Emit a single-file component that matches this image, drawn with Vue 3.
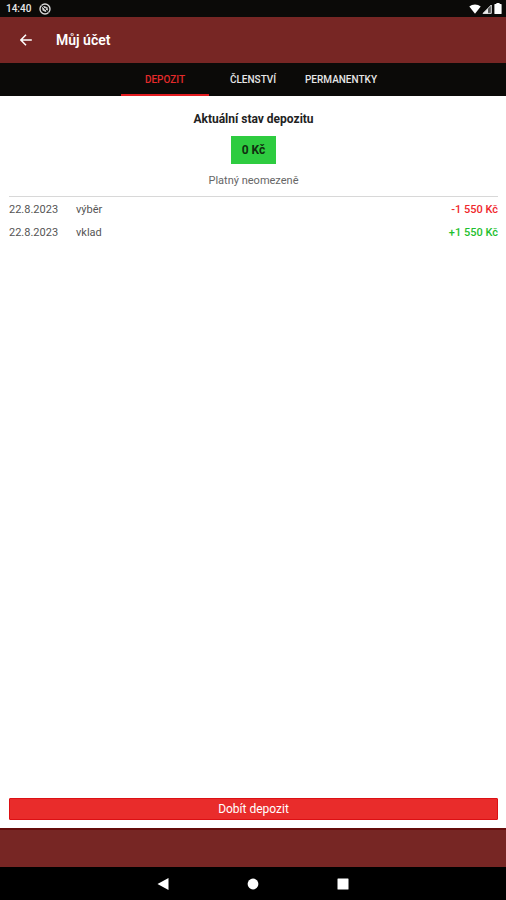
<template>
  <div class="screen">
    <div class="status-bar">
      <span class="time">14:40</span>
      <svg class="status-icon" viewBox="0 0 12 12" aria-hidden="true">
        <circle cx="6" cy="6" r="5" fill="none" stroke="#d8d8d8" stroke-width="1.4" />
        <path d="M3 4.5L5 3L8.5 4.2L9 7L6.5 9L3.6 7.6Z" fill="#d0d0d0" />
        <path d="M2.6 2.6L9.4 9.4M5.8 6.4L7.4 4.8" stroke="#111" stroke-width="0.9" />
      </svg>
      <div class="status-right">
        <svg width="12" height="10" viewBox="0 0 12 10" aria-hidden="true">
          <path d="M0.3 2.6C3.4 -0.3 8.6 -0.3 11.7 2.6L6 9.8Z" fill="#fff" />
        </svg>
        <svg width="10" height="10" viewBox="0 0 10 10" aria-hidden="true">
          <path d="M1 9.4L9.3 1V9.4Z" fill="#555" stroke="#ddd" stroke-width="1" />
          <path d="M1 9.5L6 4.5V9.5Z" fill="#eee" />
        </svg>
        <svg class="battery" width="8" height="11" viewBox="0 0 8 11" aria-hidden="true">
          <path d="M2.4 0H5.6V1H7Q7.6 1 7.6 1.6V10.4Q7.6 11 7 11H1Q0.4 11 0.4 10.4V1.6Q0.4 1 1 1H2.4Z" fill="#fff" />
        </svg>
      </div>
    </div>

    <header class="app-header">
      <button class="back-btn" type="button" aria-label="Zpět">
        <svg width="12" height="12" viewBox="0 0 12 12" aria-hidden="true">
          <path d="M11.8 6H1M6 0.8L0.9 6L6 11.2" fill="none" stroke="#fff" stroke-width="1.5" />
        </svg>
      </button>
      <h1>Můj účet</h1>
    </header>

    <nav class="tabs">
      <button
        v-for="tab in tabs"
        :key="tab"
        type="button"
        class="tab"
        :class="{ active: tab === activeTab }"
        @click="activeTab = tab"
      >
        {{ tab }}
      </button>
    </nav>

    <main class="content">
      <section class="summary">
        <h2>Aktuální stav depozitu</h2>
        <div class="balance">0 Kč</div>
        <p>Platný neomezeně</p>
      </section>

      <table class="history">
        <tbody>
          <tr v-for="item in history" :key="item.type">
            <td class="date">{{ item.date }}</td>
            <td>{{ item.type }}</td>
            <td class="amount" :class="item.kind">{{ item.amount }}</td>
          </tr>
        </tbody>
      </table>

      <button class="topup-btn" type="button">Dobít depozit</button>
    </main>

    <div class="bottom-strip"></div>

    <div class="system-nav">
      <button type="button" aria-label="Zpět">
        <svg width="12" height="12" viewBox="0 0 12 12" aria-hidden="true">
          <path d="M0.5 6L11.5 0V12Z" fill="#fff" />
        </svg>
      </button>
      <button type="button" aria-label="Domů">
        <svg width="12" height="12" viewBox="0 0 12 12" aria-hidden="true">
          <circle cx="6" cy="6" r="5.4" fill="#fff" />
        </svg>
      </button>
      <button type="button" aria-label="Poslední aplikace">
        <svg width="12" height="12" viewBox="0 0 12 12" aria-hidden="true">
          <rect x="0.5" y="0.5" width="11" height="11" rx="0.5" fill="#fff" />
        </svg>
      </button>
    </div>
  </div>
</template>

<script setup>
import { ref } from 'vue'

const tabs = ['DEPOZIT', 'ČLENSTVÍ', 'PERMANENTKY']
const activeTab = ref('DEPOZIT')

const history = [
  { date: '22.8.2023', type: 'výběr', amount: '-1 550 Kč', kind: 'minus' },
  { date: '22.8.2023', type: 'vklad', amount: '+1 550 Kč', kind: 'plus' }
]
</script>

<style>
body {
  margin: 0;
}
</style>

<style scoped>
.screen {
  display: flex;
  flex-direction: column;
  min-height: 100vh;
  background: #fff;
  font-family: Roboto, "Liberation Sans", sans-serif;
}

button {
  padding: 0;
  border: none;
  background: none;
  font-family: inherit;
  cursor: pointer;
}

svg {
  display: block;
}

.status-bar {
  display: flex;
  align-items: center;
  height: 17px;
  padding: 0 4px 0 6px;
  background: #0b0a08;
  color: #e8e8e8;
}

.time {
  font-size: 10px;
  font-weight: 500;
}

.status-icon {
  width: 12px;
  height: 12px;
  margin-left: 8px;
}

.status-right {
  display: flex;
  align-items: center;
  gap: 1px;
  margin-left: auto;
}

.battery {
  margin-left: 1px;
}

.app-header {
  display: flex;
  align-items: center;
  height: 46px;
  padding-left: 14px;
  background: #772624;
}

.back-btn {
  display: flex;
  align-items: center;
  justify-content: center;
  width: 24px;
  height: 24px;
}

.app-header h1 {
  margin: 0 0 0 18px;
  color: #fff;
  font-size: 14px;
  font-weight: 600;
}

.tabs {
  display: flex;
  justify-content: center;
  height: 33px;
  background: #0b0a08;
}

.tab {
  width: 88px;
  border-top: 2px solid transparent;
  border-bottom: 2px solid transparent;
  color: #e6e6e6;
  font-size: 10px;
  font-weight: 500;
}

.tab.active {
  border-bottom-color: #e31c20;
  color: #e52a2b;
}

.content {
  display: flex;
  flex: 1;
  flex-direction: column;
  padding: 16px 8px 8px 9px;
}

.summary {
  display: flex;
  flex-direction: column;
  align-items: center;
  padding-bottom: 8px;
  border-bottom: 1px solid #d8d8d8;
}

.summary h2 {
  margin: 0;
  color: #222;
  font-size: 12px;
  font-weight: 700;
  line-height: 14px;
}

.balance {
  margin: 10px 0;
  padding: 0 11px;
  background: #2ecc40;
  color: #10300f;
  font-size: 12px;
  font-weight: 700;
  line-height: 28px;
}

.summary p {
  margin: 0;
  color: #666;
  font-size: 11px;
  line-height: 14px;
}

.history {
  width: 100%;
  margin-top: 1px;
  border-collapse: collapse;
  color: #555;
  font-size: 11px;
  line-height: 23px;
}

.history td {
  padding: 0;
}

.history .date {
  width: 67px;
}

.history .amount {
  font-weight: 500;
  text-align: right;
}

.history .minus {
  color: #f0282d;
}

.history .plus {
  color: #1fbf30;
}

.topup-btn {
  height: 22px;
  margin-top: auto;
  border: 1px solid #dc1014;
  border-radius: 1px;
  background: #e92c2b;
  color: #fff;
  font-size: 12px;
}

.bottom-strip {
  height: 37px;
  border-top: 2px solid #650d0b;
  background: #772624;
}

.system-nav {
  display: flex;
  align-items: center;
  justify-content: center;
  gap: 66px;
  height: 33px;
  background: #000;
}

.system-nav button {
  display: flex;
  align-items: center;
  justify-content: center;
  width: 24px;
  height: 24px;
}
</style>
